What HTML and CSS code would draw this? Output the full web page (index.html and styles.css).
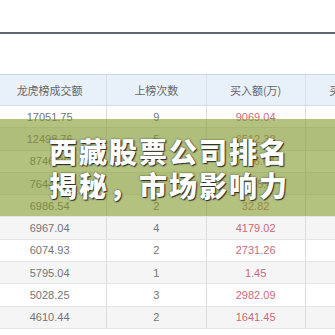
FILE: index.html
```html
<!DOCTYPE html>
<html lang="zh">
<head>
<meta charset="utf-8">
<link rel="stylesheet" href="styles.css">
</head>
<body>
<div class="page">
  <div class="topline"></div>
  <table class="rank">
    <thead>
      <tr><th class="c1">龙虎榜成交额</th><th>上榜次数</th><th>买入额(万)</th><th>买入额(万)</th></tr>
    </thead>
    <tbody>
      <tr><td class="c1">17051.75</td><td>9</td><td class="buy">9069.04</td><td></td></tr>
      <tr><td class="c1">12498.76</td><td>5</td><td class="buy">6512.38</td><td></td></tr>
      <tr><td class="c1">8746.85</td><td>3</td><td class="buy">7116.64</td><td></td></tr>
      <tr><td class="c1">7644.12</td><td>4</td><td class="buy">3565.4</td><td></td></tr>
      <tr><td class="c1">6986.54</td><td>2</td><td class="buy">32.82</td><td></td></tr>
      <tr><td class="c1">6967.04</td><td>4</td><td class="buy">4179.02</td><td></td></tr>
      <tr><td class="c1">6074.93</td><td>2</td><td class="buy">2731.26</td><td></td></tr>
      <tr><td class="c1">5795.04</td><td>1</td><td class="buy">1.45</td><td></td></tr>
      <tr><td class="c1">5028.25</td><td>3</td><td class="buy">2982.09</td><td></td></tr>
      <tr><td class="c1">4610.44</td><td>2</td><td class="buy">1641.45</td><td></td></tr>
    </tbody>
  </table>
  <div class="banner">
    <h1 class="title">西藏股票公司排名<br>揭秘，市场影响力</h1>
  </div>
</div>
</body>
</html>
```
FILE: styles.css
```css
html, body {
  margin: 0;
  padding: 0;
  background: #ffffff;
}
.page {
  position: relative;
  width: 335px;
  height: 335px;
  overflow: hidden;
  font-family: "Liberation Sans", "Noto Sans CJK SC", sans-serif;
}
.topline {
  margin-top: 32px;
  height: 2px;
  background: #5c6470;
}
.rank {
  margin-top: 40px;
  margin-left: -7px;
  border-collapse: collapse;
  table-layout: fixed;
  width: 411px;
  font-size: 11px;
  color: #747474;
}
.rank th, .rank td {
  width: 98px;
  text-align: center;
  border-left: 1px solid #d9dee3;
  padding: 0;
  white-space: nowrap;
  overflow: hidden;
}
.rank .c1 {
  width: 113px;
  border-left: none;
}
.rank th {
  height: 30px;
  background: #e8f1f9;
  border-top: 1px solid #cad8e4;
  border-bottom: 1px solid #d3dde6;
  font-weight: normal;
  color: #666;
  font-family: "Noto Sans CJK SC", sans-serif;
  font-size: 11px;
}
.rank td {
  height: 21.3px;
  border-bottom: 1px solid #e4e4e4;
}
.rank tbody tr:nth-child(even) td {
  background: #f5f5f5;
}
.rank td.buy {
  color: #cc6a7a;
}
.banner {
  position: absolute;
  left: 0;
  right: 0;
  top: 119px;
  height: 97px;
  background: rgba(128, 154, 40, 0.6);
  display: flex;
  align-items: center;
  justify-content: center;
}
.title {
  margin: 0 0 0 3px;
  font-family: "Noto Sans CJK SC", sans-serif;
  font-weight: 900;
  font-size: 28px;
  letter-spacing: 2px;
  line-height: 34px;
  color: #ffffff;
  text-align: center;
  text-shadow: 1px 1px 1px rgba(30, 30, 30, 0.9), 0 0 2px rgba(30, 30, 30, 0.7);
}
```
